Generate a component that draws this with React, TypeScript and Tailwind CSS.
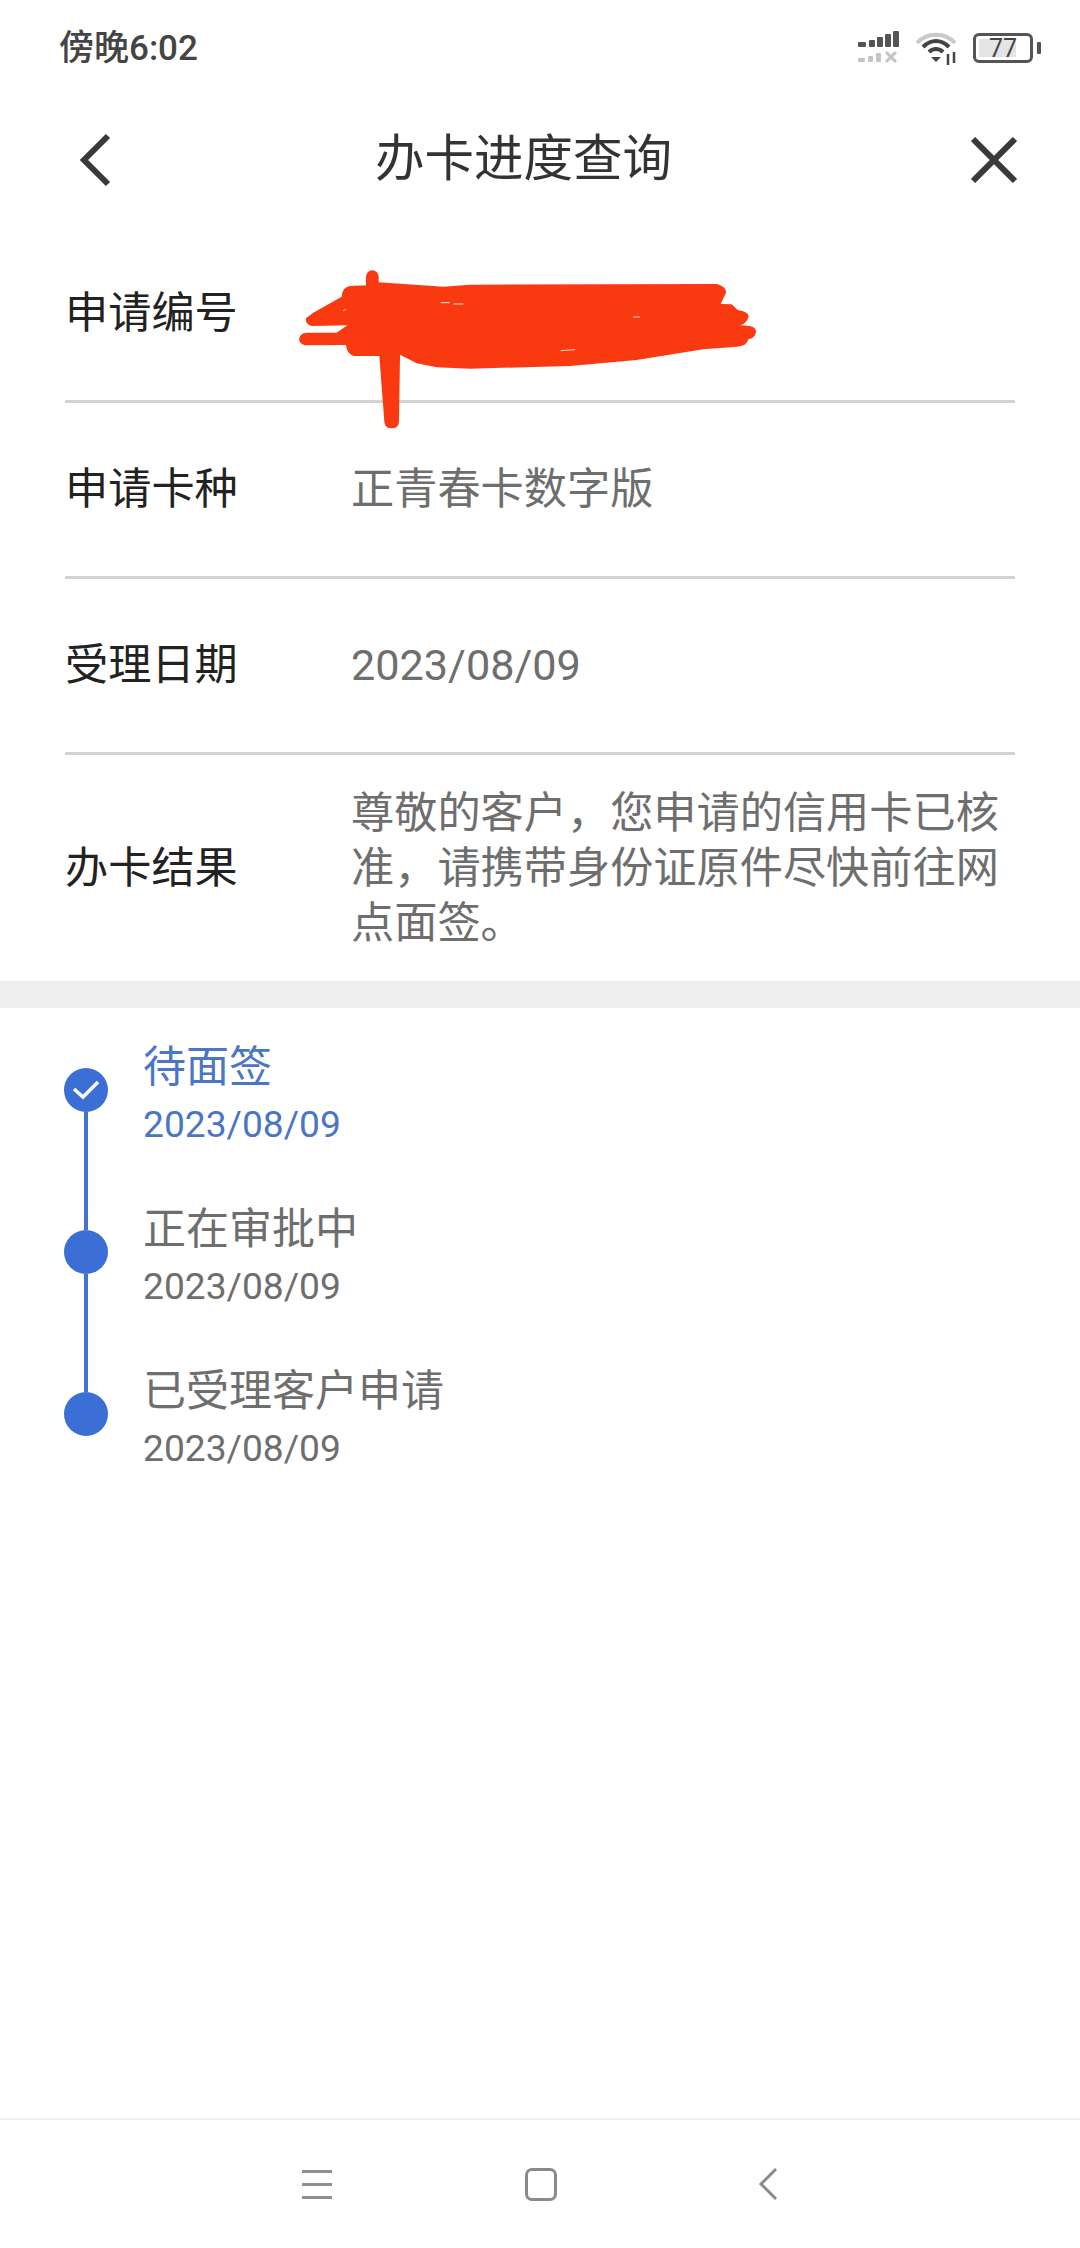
const fontStack = "font-['Roboto','Noto_Sans_CJK_SC',sans-serif]";

const StatusIcons = () => (
  <div className="flex items-center">
    {/* signal: two SIM rows */}
    <svg width="44" height="34" viewBox="0 0 44 34" className="mr-[14px]">
      <g fill="#555">
        <rect x="1" y="11" width="8" height="5" rx="1" />
        <rect x="12" y="9" width="6" height="7" rx="1" />
        <rect x="20" y="6" width="6" height="10" rx="1" />
        <rect x="28" y="3" width="6" height="13" rx="1" />
        <rect x="36" y="0" width="6" height="16" rx="1" />
      </g>
      <g fill="#c4c4c4">
        <rect x="1" y="27" width="7" height="4" rx="1" />
        <rect x="11" y="25" width="5" height="6" rx="1" />
        <rect x="19" y="22" width="5" height="9" rx="1" />
      </g>
      <path d="M29 21l10 10M39 21L29 31" stroke="#c4c4c4" strokeWidth="3" fill="none" />
    </svg>
    {/* wifi with activity arrows */}
    <svg width="44" height="36" viewBox="0 0 44 36" className="mr-[14px]">
      <path d="M2 13C12 2 30 2 40 13" stroke="#c9c9c9" strokeWidth="4" fill="none" />
      <path d="M8 17C16 9 26 9 34 17" stroke="#444" strokeWidth="4" fill="none" />
      <path d="M14 22C18 18 24 18 28 22" stroke="#444" strokeWidth="4" fill="none" />
      <path d="M16 27h10l-5 5z" fill="#444" />
      <path d="M33 24v11M39 22v11" stroke="#444" strokeWidth="2.5" fill="none" />
    </svg>
    {/* battery */}
    <div className="relative flex h-[30px] w-[60px] items-center rounded-[6px] border-[3px] border-[#555] p-[3px]">
      <div className="h-full w-[77%] bg-[#e4e4e4]" />
      <span className="absolute inset-0 flex items-center justify-center text-[25px] leading-none text-[#444]">
        77
      </span>
    </div>
    <div className="ml-[4px] h-[12px] w-[4px] rounded-[1px] bg-[#555]" />
  </div>
);

const InfoRow = ({ label, value }: { label: string; value?: string }) => (
  <div className="flex h-[176px] items-center border-b-[3px] border-[#d2d2d2]">
    <div className="w-[286px] shrink-0 text-[43.2px] leading-[55px] text-[#222]">{label}</div>
    {value && <div className="text-[43.2px] leading-[55px] text-[#6e6e6e]">{value}</div>}
  </div>
);

const steps = [
  { title: "待面签", date: "2023/08/09", active: true },
  { title: "正在审批中", date: "2023/08/09", active: false },
  { title: "已受理客户申请", date: "2023/08/09", active: false },
];

const Timeline = () => (
  <div className="pl-[64px] pt-[30px]">
    {steps.map((step, i) => (
      <div key={step.title} className="flex h-[162px]">
        <div className="flex w-[44px] shrink-0 flex-col items-center">
          <div className={`h-[30px] w-[4px] ${i === 0 ? "bg-transparent" : "bg-[#4472cc]"}`} />
          <div className="flex h-[44px] w-[44px] shrink-0 items-center justify-center rounded-full bg-[#3b6fd6]">
            {step.active && (
              <svg width="30" height="24" viewBox="0 0 30 24">
                <path d="M3 11l9 8L27 4" stroke="#fff" strokeWidth="3.5" fill="none" />
              </svg>
            )}
          </div>
          <div className={`w-[4px] flex-1 ${i === steps.length - 1 ? "bg-transparent" : "bg-[#4472cc]"}`} />
        </div>
        <div className="pl-[35px]">
          <div className={`pt-[2px] text-[43px] leading-[55px] ${step.active ? "text-[#4a76c4]" : "text-[#6e6e6e]"}`}>
            {step.title}
          </div>
          <div className={`mt-[4px] text-[37.2px] leading-[50px] ${step.active ? "text-[#4a76c4]" : "text-[#6e6e6e]"}`}>
            {step.date}
          </div>
        </div>
      </div>
    ))}
  </div>
);

// red marker scribble over the application number
const Scribble = () => (
  <svg
    width="510"
    height="200"
    viewBox="0 0 1530 600"
    className="absolute left-[270px] top-[250px]"
  >
    <path
      fill="#f93a11"
      d="M288 80a19 19 0 0 1 38 0L326 97L520 110L600 104L1340 102Q1370 110 1368 128L1352 162L1385 163L1403 180Q1436 185 1436 200Q1430 220 1410 226Q1458 225 1458 245Q1455 265 1435 268Q1430 290 1400 290L1300 298L1100 330L900 348L600 356L500 352L440 340L390 314L387 515Q385 535 365 535Q345 535 343 515L328 318L250 318Q230 310 228 285L105 286Q85 280 88 265Q90 250 110 248L200 248L232 226L125 228Q105 222 108 205L130 188L215 140Q215 112 240 108L288 106Z"
    />
    <path d="M512 158h28M550 162h30M1090 201h20M872 302l44-3M220 182l8-4" stroke="#fde0d6" strokeWidth="3" fill="none" />
  </svg>
);

export default function App() {
  return (
    <div className={`relative flex h-[2248px] w-[1080px] flex-col overflow-hidden bg-white ${fontStack}`}>
      {/* status bar */}
      <div className="flex h-[96px] shrink-0 items-center justify-between pl-[59px] pr-[39px]">
        <span className="text-[35px] font-medium leading-none text-[#444]">傍晚6:02</span>
        <StatusIcons />
      </div>

      {/* title bar */}
      <div className="flex h-[131px] shrink-0 items-center justify-between pb-[3px] pl-[78px] pr-[63px]">
        <svg width="36" height="54" viewBox="0 0 36 54">
          <path d="M30 3L6 27l24 24" stroke="#3a3a3a" strokeWidth="6" fill="none" />
        </svg>
        <h1 className="mr-[38px] text-[49.5px] font-normal leading-none text-[#333]">办卡进度查询</h1>
        <svg width="46" height="46" viewBox="0 0 46 46">
          <path d="M2 2l42 42M44 2L2 44" stroke="#3a3a3a" strokeWidth="6" fill="none" />
        </svg>
      </div>

      {/* application details */}
      <div className="mx-[65px] shrink-0">
        <InfoRow label="申请编号" />
        <InfoRow label="申请卡种" value="正青春卡数字版" />
        <InfoRow label="受理日期" value="2023/08/09" />
        <div className="flex h-[226px] items-center">
          <div className="w-[286px] shrink-0 text-[43.2px] leading-[55px] text-[#222]">办卡结果</div>
          <div className="text-[43.2px] leading-[55px] text-[#6e6e6e]">
            尊敬的客户，您申请的信用卡已核准，请携带身份证原件尽快前往网点面签。
          </div>
        </div>
      </div>

      <div className="h-[27px] shrink-0 bg-[#eeeeee]" />

      <Timeline />

      {/* system navigation */}
      <div className="mt-auto flex h-[130px] shrink-0 items-center border-t-2 border-[#efefef] pl-[302px]">
        <div className="flex w-[30px] flex-col gap-[10px]">
          <div className="h-[3px] bg-[#8f8f8f]" />
          <div className="h-[3px] bg-[#8f8f8f]" />
          <div className="h-[3px] bg-[#8f8f8f]" />
        </div>
        <div className="ml-[193px] h-[33px] w-[32px] rounded-[7px] border-[3px] border-[#8a8a8a]" />
        <svg width="20" height="34" viewBox="0 0 20 34" className="ml-[201px]">
          <path d="M18 2L3 17l15 15" stroke="#8a8a8a" strokeWidth="3" fill="none" />
        </svg>
      </div>

      <Scribble />
    </div>
  );
}
